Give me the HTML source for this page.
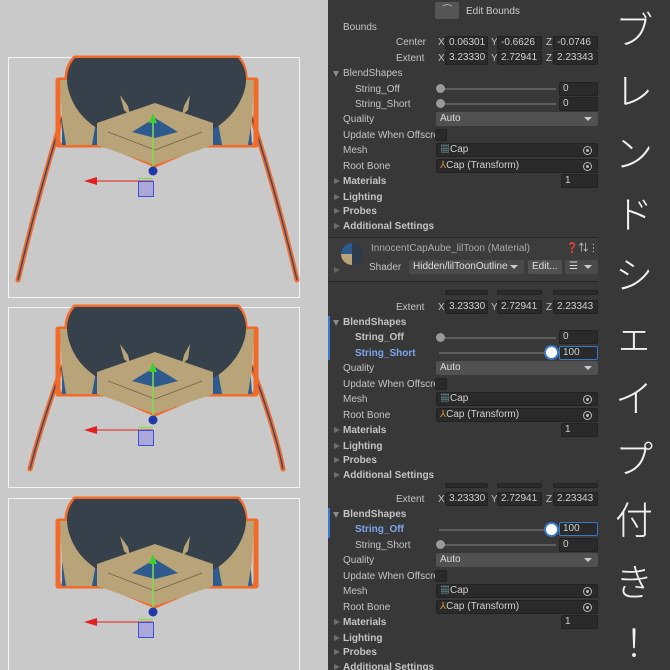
<!DOCTYPE html>
<html style="overflow:hidden"><head><meta charset="utf-8"><style>
*{margin:0;padding:0;box-sizing:border-box}
html,body{overflow:hidden}
body{width:670px;height:670px;background:#383838;position:relative;font-family:"Liberation Sans","Noto Sans CJK JP",sans-serif}
#left{position:absolute;left:0;top:0;width:328px;height:670px;background:#c9c9c9;overflow:hidden}
#left svg{display:block}
#ins{position:absolute;left:328px;top:0;width:270px;height:670px;background:#383838;overflow:hidden;color:#c4c4c4;font-size:10px}
.t{position:absolute;line-height:15px;height:15px;white-space:nowrap}
.b{font-weight:bold}
.box{position:absolute;height:14px;background:#2a2a2a;border:1px solid #222;border-radius:2px;color:#d0d0d0;line-height:12px;padding-left:3px;font-size:10px;white-space:nowrap;overflow:hidden}
.dd{position:absolute;left:108px;width:162px;height:14px;background:#515151;border-radius:2px;color:#ddd;line-height:14px;padding-left:4px}
.dd:after{content:"";position:absolute;right:6px;top:5px;border-left:4px solid transparent;border-right:4px solid transparent;border-top:4px solid #ccc}
.trk{position:absolute;left:111px;width:117px;height:2px;background:#5e5e5e}
.knob{position:absolute;width:9px;height:9px;border-radius:50%;background:#999}
.knobA{position:absolute;width:11px;height:11px;border-radius:50%;background:#fff;box-shadow:0 0 0 2px #3a79c6}
.arr{position:absolute;left:6px;border-top:3.5px solid transparent;border-bottom:3.5px solid transparent;border-left:6px solid #707070}
.arrd{position:absolute;left:5px;border-left:3.5px solid transparent;border-right:3.5px solid transparent;border-top:6px solid #8a8a8a}
.bar{position:absolute;left:0;width:2px;background:#3a7bd0}
.cb{position:absolute;left:107px;width:12px;height:12px;background:#2a2a2a;border:1px solid #222;border-radius:2px}
.tg{position:absolute;right:5px;width:9px;height:9px;border:1.2px solid #bbb;border-radius:50%}
.tg:after{content:"";position:absolute;left:2px;top:2px;width:3px;height:3px;background:#bbb;border-radius:50%}
.blue{color:#7ba7ee}
#side{position:absolute;left:598px;top:0;width:72px;height:670px;color:#f0f0f0;font-family:"Noto Sans CJK JP",sans-serif;font-weight:300;font-size:38px;line-height:61.3px;text-align:center}
</style></head><body>
<div id="left">
<svg width="328" height="670" viewBox="0 0 328 670">
<defs>
<g id="hatO">
 <path d="M75,58 H238 Q248,70 244,90 L248,80 L256,80 L256,145 L58,145 L58,80 L66,80 L68,90 Q64,70 75,58 Z" />
 <path d="M97,140 L155,165 L213,140 Z"/>
</g>
<g id="hat">
 <use href="#hatO" fill="none" stroke="#f06a2a" stroke-width="5" stroke-linejoin="round"/>
 <path d="M62,115 L250,115 L252,145 L62,145 Z" fill="#2e5a8e"/>
 <path d="M60,80 L70,80 L80,102 L96,122 L92,145 L66,145 L62,120 Z" fill="#b8a478"/>
 <path d="M254,80 L244,80 L234,102 L218,122 L222,145 L248,145 L252,120 Z" fill="#b8a478"/>
 <path d="M75,58 H238 Q250,72 244,92 Q236,116 212,130 L155,104 L100,130 Q76,116 69,92 Q63,72 75,58 Z" fill="#37414b"/>
 <path d="M97,123 L155,103 L213,123 L213,145 L155,165 L97,145 Z" fill="#b8a478"/>
 <path d="M132,132 L155,118 L178,132 L155,138 Z" fill="#2e5a8e"/>
 <path d="M120,95 L128,106 L130,115 L124,110 Z M190,95 L184,106 L182,115 L188,110 Z" fill="#b8a478"/>
 <path d="M108,132 L155,150 L202,132" fill="none" stroke="#6a5e44" stroke-width="0.7"/>
</g>
<g id="giz">
 <line x1="153" y1="171" x2="153" y2="122" stroke="#7ee04a" stroke-width="1.5"/>
 <path d="M149,123 L153,113 L157,123 Z" fill="#3ed02a"/>
 <line x1="153" y1="181" x2="92" y2="181" stroke="#e04040" stroke-width="1.2"/>
 <path d="M84,181 L97,177 L97,185 Z" fill="#e02020"/>
 <rect x="138.5" y="181.5" width="15" height="15" fill="#aaa8d8" stroke="#3c50e0"/>
 <line x1="138" y1="178.5" x2="153" y2="178.5" stroke="#7ee04a" stroke-width="1.2"/>
 <circle cx="153" cy="171" r="4.5" fill="#2038a8"/>
</g>
</defs>
<rect x="8.5" y="57.5" width="291" height="240" fill="none" stroke="#f4f4f4"/>
<rect x="8.5" y="307.5" width="291" height="180" fill="none" stroke="#f4f4f4"/>
<rect x="8.5" y="498.5" width="291" height="180" fill="none" stroke="#f4f4f4"/>
<g>
 <path d="M62,118 Q38,195 18,280 M252,118 Q277,195 297,280" fill="none" stroke="#f06a2a" stroke-width="5" stroke-linecap="round"/>
 <path d="M62,118 Q38,195 18,280 M252,118 Q277,195 297,280" fill="none" stroke="#3e4c6c" stroke-width="1.5"/>
 <use href="#hat"/><use href="#giz"/>
</g>
<g transform="translate(0,249)">
 <path d="M62,118 Q40,180 30,220 M252,118 Q275,180 283,220" fill="none" stroke="#f06a2a" stroke-width="5" stroke-linecap="round"/>
 <path d="M62,118 Q40,180 30,220 M252,118 Q275,180 283,220" fill="none" stroke="#3e4c6c" stroke-width="1.5"/>
 <use href="#hat"/><use href="#giz"/>
</g>
<g transform="translate(0,441)"><use href="#hat"/><use href="#giz"/></g>
</svg>
</div>

<div id="ins">
<div style="position:absolute;left:107px;top:2px;width:24px;height:17px;background:#555;border-radius:2px;color:#bbb;font-size:10px;text-align:center;line-height:17px">⏜</div>
<div class="t" style="left:138px;top:4px;color:#ccc">Edit Bounds</div>
<div class="t" style="left:15px;top:20px">Bounds</div>
<div class="t" style="left:68px;top:35px">Center</div>
<div class="t" style="left:110px;top:35px">X</div><div class="box" style="left:117px;top:36px;width:43px">0.06301</div>
<div class="t" style="left:163px;top:35px">Y</div><div class="box" style="left:169px;top:36px;width:45px">-0.6626</div>
<div class="t" style="left:218px;top:35px">Z</div><div class="box" style="left:225px;top:36px;width:45px">-0.0746</div>

<div class="t" style="left:68px;top:51px">Extent</div>
<div class="t" style="left:110px;top:51px">X</div><div class="box" style="left:117px;top:51px;width:43px">3.23330</div>
<div class="t" style="left:163px;top:51px">Y</div><div class="box" style="left:169px;top:51px;width:45px">2.72941</div>
<div class="t" style="left:218px;top:51px">Z</div><div class="box" style="left:225px;top:51px;width:45px">2.23343</div>
<div class="arrd" style="top:71px"></div><div class="t" style="left:15px;top:66px">BlendShapes</div>
<div class="t" style="left:27px;top:82px">String_Off</div><div class="trk" style="top:88px"></div><div class="knob" style="left:108px;top:84px"></div><div class="box" style="left:231px;top:82px;width:39px">0</div>
<div class="t" style="left:27px;top:97px">String_Short</div><div class="trk" style="top:103px"></div><div class="knob" style="left:108px;top:99px"></div><div class="box" style="left:231px;top:97px;width:39px">0</div>
<div class="t" style="left:15px;top:112px">Quality</div><div class="dd" style="top:112px">Auto</div>
<div class="t" style="left:15px;top:128px">Update When Offscre</div><div class="cb" style="top:129px"></div>
<div class="t" style="left:15px;top:143px">Mesh</div><div class="box" style="left:108px;top:143px;width:162px"><span style="color:#7ab">▦</span>Cap<span class="tg" style="top:2px"></span></div>
<div class="t" style="left:15px;top:159px">Root Bone</div><div class="box" style="left:108px;top:159px;width:162px"><span style="color:#c93">⅄</span>Cap (Transform)<span class="tg" style="top:2px"></span></div>
<div class="arr" style="top:178px"></div><div class="t b" style="left:15px;top:174px">Materials</div><div class="box" style="left:233px;top:174px;width:37px">1</div>
<div class="arr" style="top:194px"></div><div class="t b" style="left:15px;top:190px">Lighting</div>
<div class="arr" style="top:208px"></div><div class="t b" style="left:15px;top:204px">Probes</div>
<div class="arr" style="top:223px"></div><div class="t b" style="left:15px;top:219px">Additional Settings</div>

<div style="position:absolute;left:0;top:237px;width:270px;height:45px;background:#3c3c3c;border-top:1px solid #252525;border-bottom:1px solid #252525"></div>
<svg style="position:absolute;left:12px;top:242px" width="24" height="24"><circle cx="12" cy="12" r="11" fill="#2c3a4a"/><path d="M12,12 L12,1 A11,11 0 0,0 1,12 Z" fill="#2e5a8e"/><path d="M12,12 L1,12 A11,11 0 0,0 12,23 Z" fill="#b8a478"/></svg>
<div class="arr" style="top:267px;border-left-color:#666"></div>
<div class="t" style="left:43px;top:241px;color:#aaa;font-size:10px">InnocentCapAube_lilToon (Material)</div>
<div class="t" style="left:238px;top:241px;color:#ccc">❓⇅⋮</div>
<div class="t" style="left:41px;top:260px">Shader</div>
<div class="dd" style="left:81px;top:260px;width:115px;background:#4a4a4a">Hidden/lilToonOutline</div>
<div style="position:absolute;left:200px;top:260px;width:34px;height:14px;background:#515151;border-radius:2px;color:#ddd;line-height:14px;padding-left:4px">Edit...</div>
<div class="dd" style="left:237px;top:260px;width:33px;background:#4a4a4a">☰</div>

<div class="box" style="left:117px;top:290px;width:43px;height:5px"></div><div class="box" style="left:169px;top:290px;width:45px;height:5px"></div><div class="box" style="left:225px;top:290px;width:45px;height:5px"></div>
<div class="t" style="left:68px;top:300px">Extent</div>
<div class="t" style="left:110px;top:300px">X</div><div class="box" style="left:117px;top:300px;width:43px">3.23330</div>
<div class="t" style="left:163px;top:300px">Y</div><div class="box" style="left:169px;top:300px;width:45px">2.72941</div>
<div class="t" style="left:218px;top:300px">Z</div><div class="box" style="left:225px;top:300px;width:45px">2.23343</div>
<div class="bar" style="top:316px;height:44px"></div>
<div class="arrd" style="top:320px"></div><div class="t b" style="left:15px;top:315px">BlendShapes</div>
<div class="t b" style="left:27px;top:330px">String_Off</div><div class="trk" style="top:337px"></div><div class="knob" style="left:108px;top:333px"></div><div class="box" style="left:231px;top:330px;width:39px">0</div>
<div class="t b blue" style="left:27px;top:346px">String_Short</div><div class="trk" style="top:352px"></div><div class="knobA" style="left:218px;top:347px"></div><div class="box" style="left:231px;top:346px;width:39px;border-color:#3a79c6">100</div>
<div class="t" style="left:15px;top:361px">Quality</div><div class="dd" style="top:361px">Auto</div>
<div class="t" style="left:15px;top:377px">Update When Offscre</div><div class="cb" style="top:378px"></div>
<div class="t" style="left:15px;top:392px">Mesh</div><div class="box" style="left:108px;top:392px;width:162px"><span style="color:#7ab">▦</span>Cap<span class="tg" style="top:2px"></span></div>
<div class="t" style="left:15px;top:408px">Root Bone</div><div class="box" style="left:108px;top:408px;width:162px"><span style="color:#c93">⅄</span>Cap (Transform)<span class="tg" style="top:2px"></span></div>
<div class="arr" style="top:427px"></div><div class="t b" style="left:15px;top:423px">Materials</div><div class="box" style="left:233px;top:423px;width:37px">1</div>
<div class="arr" style="top:443px"></div><div class="t b" style="left:15px;top:439px">Lighting</div>
<div class="arr" style="top:457px"></div><div class="t b" style="left:15px;top:453px">Probes</div>
<div class="arr" style="top:472px"></div><div class="t b" style="left:15px;top:468px">Additional Settings</div>

<div class="box" style="left:117px;top:483px;width:43px;height:5px"></div><div class="box" style="left:169px;top:483px;width:45px;height:5px"></div><div class="box" style="left:225px;top:483px;width:45px;height:5px"></div>
<div class="t" style="left:68px;top:492px">Extent</div>
<div class="t" style="left:110px;top:492px">X</div><div class="box" style="left:117px;top:492px;width:43px">3.23330</div>
<div class="t" style="left:163px;top:492px">Y</div><div class="box" style="left:169px;top:492px;width:45px">2.72941</div>
<div class="t" style="left:218px;top:492px">Z</div><div class="box" style="left:225px;top:492px;width:45px">2.23343</div>
<div class="bar" style="top:508px;height:30px"></div>
<div class="arrd" style="top:512px"></div><div class="t b" style="left:15px;top:507px">BlendShapes</div>
<div class="t b blue" style="left:27px;top:522px">String_Off</div><div class="trk" style="top:529px"></div><div class="knobA" style="left:218px;top:524px"></div><div class="box" style="left:231px;top:522px;width:39px;border-color:#3a79c6">100</div>
<div class="t" style="left:27px;top:538px">String_Short</div><div class="trk" style="top:544px"></div><div class="knob" style="left:108px;top:540px"></div><div class="box" style="left:231px;top:538px;width:39px">0</div>
<div class="t" style="left:15px;top:553px">Quality</div><div class="dd" style="top:553px">Auto</div>
<div class="t" style="left:15px;top:569px">Update When Offscre</div><div class="cb" style="top:570px"></div>
<div class="t" style="left:15px;top:584px">Mesh</div><div class="box" style="left:108px;top:584px;width:162px"><span style="color:#7ab">▦</span>Cap<span class="tg" style="top:2px"></span></div>
<div class="t" style="left:15px;top:600px">Root Bone</div><div class="box" style="left:108px;top:600px;width:162px"><span style="color:#c93">⅄</span>Cap (Transform)<span class="tg" style="top:2px"></span></div>
<div class="arr" style="top:619px"></div><div class="t b" style="left:15px;top:615px">Materials</div><div class="box" style="left:233px;top:615px;width:37px">1</div>
<div class="arr" style="top:635px"></div><div class="t b" style="left:15px;top:631px">Lighting</div>
<div class="arr" style="top:649px"></div><div class="t b" style="left:15px;top:645px">Probes</div>
<div class="arr" style="top:664px"></div><div class="t b" style="left:15px;top:660px">Additional Settings</div>
</div>

<div id="side"><div style="margin-top:-3px">ブ<br>レ<br>ン<br>ド<br>シ<br>ェ<br>イ<br>プ<br>付<br>き<br>！</div></div>
</body></html>
